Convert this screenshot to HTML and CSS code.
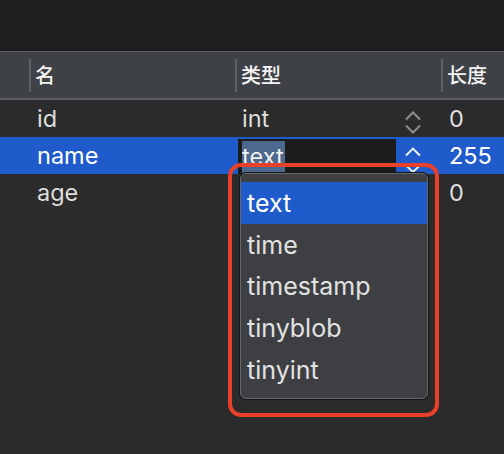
FILE: index.html
```html
<!DOCTYPE html>
<html>
<head>
<meta charset="utf-8">
<link rel="stylesheet" href="styles.css">
</head>
<body>
<div class="screen">
  <div class="top"></div>
  <div class="table">
    <div class="header">
      <div class="hcell"></div>
      <div class="hcell"><span class="sep"></span><span class="htext">名</span></div>
      <div class="hcell"><span class="sep"></span><span class="htext">类型</span></div>
      <div class="hcell"><span class="sep"></span><span class="htext">长度</span></div>
    </div>
    <div class="row">
      <div class="cell"></div>
      <div class="cell name">id</div>
      <div class="cell type"><span class="tval">int</span>
        <svg class="stepper" width="16" height="30" viewBox="0 0 16 30"><path d="M1 15.5 L8 8.5 L15 15.5" /><path d="M1 21.5 L8 28.5 L15 21.5" /></svg>
      </div>
      <div class="cell len">0</div>
    </div>
    <div class="row selected">
      <div class="cell"></div>
      <div class="cell name">name</div>
      <div class="cell type">
        <div class="field"><span class="sel">text</span></div>
        <svg class="stepper light" width="16" height="34" viewBox="0 0 16 34"><path d="M1 16.5 L8 9.5 L15 16.5" /><path d="M1 26.5 L8 33 L15 26.5" /></svg>
      </div>
      <div class="cell len">255</div>
    </div>
    <div class="row">
      <div class="cell"></div>
      <div class="cell name">age</div>
      <div class="cell type"></div>
      <div class="cell len">0</div>
    </div>
  </div>
  <div class="highlight"></div>
  <div class="popup">
    <div class="item active">text</div>
    <div class="item">time</div>
    <div class="item">timestamp</div>
    <div class="item">tinyblob</div>
    <div class="item">tinyint</div>
  </div>
</div>
</body>
</html>
```
FILE: styles.css
```css
* { box-sizing: border-box; }
html, body { margin: 0; padding: 0; background: #1e1e1e; }
body { width: 504px; height: 454px; overflow: hidden; font-family: "Inter", "Noto Sans CJK SC", sans-serif; }
.screen { position: relative; width: 504px; height: 454px; background: #2b2b2b; }
.top { height: 51px; background: #1e1e1e; }
.table { border-top: 1px solid #5e5e5e; }
.header {
  display: grid;
  grid-template-columns: 29px 206px 206px 63px;
  height: 48px;
  background: #3e4145;
  border-bottom: 2px solid #595b5e;
}
.hcell { display: flex; align-items: center; }
.sep { width: 2px; height: 33px; background: #5e6165; margin-right: 4px; }
.htext { font-family: "Noto Sans CJK SC", sans-serif; font-size: 20px; font-weight: 500; color: #f4f4f4; line-height: 1; }
.row {
  display: grid;
  grid-template-columns: 29px 206px 206px 63px;
  height: 37px;
  background: #2b2b2b;
  color: #dedede;
  font-size: 23.5px;
}
.row.selected { background: #1f5bcb; color: #ffffff; }
.cell { display: flex; align-items: center; }
.name { padding-left: 8px; }
.type { padding-left: 7px; position: relative; }
.len { padding-left: 8px; }
.tval { flex: 1; }
.stepper { fill: none; stroke: #8e8e8e; stroke-width: 2; margin-right: 20px; }
.stepper.light { stroke: #eef2fa; }
.field {
  margin-left: -4px;
  width: 159px;
  height: 35px;
  align-self: flex-start;
  margin-top: 2px;
  background: #1c1c1c;
  display: flex;
  align-items: center;
  padding-left: 4px;
  margin-right: 9px;
}
.sel { background: #4d6a8e; color: #f2f2f2; height: 32px; display: flex; align-items: center; padding-right: 1px; }
.highlight {
  position: absolute;
  left: 228px; top: 163px;
  width: 211px; height: 254px;
  border: 4.5px solid #e8412b;
  border-radius: 13px;
}
.popup {
  position: absolute;
  left: 240px; top: 173px;
  width: 188px; height: 226px;
  background: #3d3f42;
  border: 1px solid #66686c;
  border-radius: 6px;
  box-shadow: 0 0 0 1px #161616;
  padding-top: 8px;
  overflow: hidden;
}
.item {
  height: 41.7px;
  display: flex;
  align-items: center;
  padding-left: 6px;
  font-size: 25px;
  color: #e2e2e2;
}
.item.active { background: #1f5bcb; color: #ffffff; }
```
